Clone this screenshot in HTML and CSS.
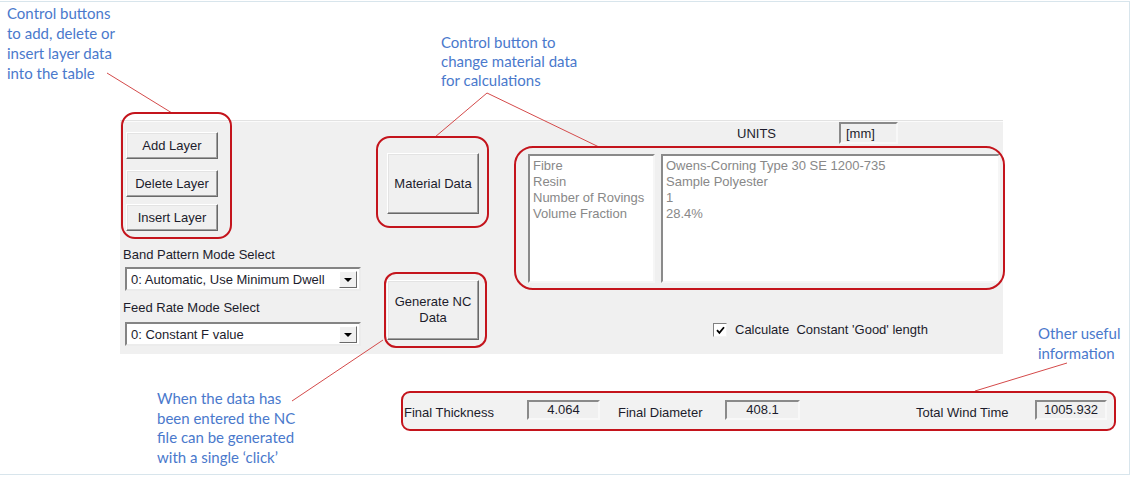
FILE: index.html
```html
<!DOCTYPE html>
<html lang="en">
  <head>
    <meta charset="UTF-8" />
    <meta name="viewport" content="width=device-width, initial-scale=1.0" />
    <title>Winding Program - Controls</title>
    <link rel="stylesheet" href="styles.css">
  </head>
  <body>
    <div class="frame">
      <div class="panel">
        <div class="col-layers">
          <button class="btn btn-layer">Add Layer</button>
          <button class="btn btn-layer btn-delete">Delete Layer</button>
          <button class="btn btn-layer btn-insert">Insert Layer</button>
          <div class="field-label band-label">Band Pattern Mode Select</div>
          <div class="combo band-combo">
            <span class="combo-text">0: Automatic, Use Minimum Dwell</span>
            <span class="combo-arrow"></span>
          </div>
          <div class="field-label feed-label">Feed Rate Mode Select</div>
          <div class="combo feed-combo">
            <span class="combo-text">0: Constant F value</span>
            <span class="combo-arrow"></span>
          </div>
        </div>
        <div class="col-actions">
          <button class="btn btn-material">Material Data</button>
          <button class="btn btn-generate">Generate NC<br>Data</button>
        </div>
        <div class="col-info">
          <div class="units-row">
            <span class="units-label">UNITS</span>
            <span class="readout units-box">[mm]</span>
          </div>
          <div class="material-info">
            <div class="info-box info-keys">Fibre<br>Resin<br>Number of Rovings<br>Volume Fraction</div>
            <div class="info-box info-values">Owens-Corning Type 30 SE 1200-735<br>Sample Polyester<br>1<br>28.4%</div>
          </div>
          <div class="check-row">
            <span class="check-box">
              <svg width="9" height="9" viewBox="0 0 9 9"><path d="M1 4.2 L3.4 6.8 L8 1.2" fill="none" stroke="#000" stroke-width="1.8"/></svg>
            </span>
            <span>Calculate&nbsp; Constant 'Good' length</span>
          </div>
        </div>
      </div>

      <div class="summary">
        <span class="sum-label thick-label">Final Thickness</span>
        <span class="readout sum-box thick-box">4.064</span>
        <span class="sum-label dia-label">Final Diameter</span>
        <span class="readout sum-box dia-box">408.1</span>
        <span class="sum-label time-label">Total Wind Time</span>
        <span class="readout sum-box time-box">1005.932</span>
      </div>

      <!-- annotation layer -->
      <svg class="callouts" width="1130" height="472" viewBox="0 2 1130 472">
        <g class="leaders">
          <line x1="107" y1="73" x2="172" y2="113" />
          <line x1="487" y1="93" x2="435" y2="137" />
          <line x1="487" y1="93" x2="599" y2="147" />
          <line x1="383" y1="340" x2="292" y2="401" />
          <line x1="1067" y1="363" x2="975" y2="391" />
        </g>
        <g class="rings">
          <rect x="122" y="113" width="109" height="125" rx="13" />
          <rect x="377" y="137" width="111" height="90" rx="13" />
          <rect x="385" y="273" width="101" height="74" rx="11" />
          <rect x="515" y="147" width="489" height="142" rx="18" />
          <rect x="402" y="392" width="713" height="38" rx="8" />
        </g>
      </svg>

      <div class="note note-layers">Control buttons<br>to add, delete or<br>insert layer data<br>into the table</div>
      <div class="note note-material">Control button to<br>change material data<br>for calculations</div>
      <div class="note note-generate">When the data has<br>been entered the NC<br>file can be generated<br>with a single ‘click’</div>
      <div class="note note-other">Other useful<br>information</div>
    </div>
  </body>
</html>
```

FILE: styles.css
```css
body {
  margin: 0;
  padding: 0;
  background: #fff;
  font-family: "Liberation Sans", Arial, sans-serif;
  font-size: 13px;
  color: #1c1c2c;
}
.frame {
  position: relative;
  width: 1129px;
  height: 472px;
  margin-top: 1px;
  border-top: 1px solid #d8e5ec;
  border-right: 1px solid #d8e5ec;
  border-bottom: 1px solid #d8e5ec;
  overflow: hidden;
}

/* grey form panel */
.panel {
  display: flex;
  width: 883px;
  height: 233px;
  margin-top: 118px;
  margin-left: 120px;
  border-top: 1px solid #e2e2e2;
  box-shadow: inset 0 1px 0 #fbfbfb;
  background: #f0f0f0;
}
.col-layers {
  display: flex;
  flex-direction: column;
  width: 240px;
  margin-left: 3px;
}
.col-actions {
  display: flex;
  flex-direction: column;
  width: 93px;
  margin-left: 24px;
}
.col-info {
  display: flex;
  flex-direction: column;
  width: 472px;
  margin-left: 48px;
}

.btn {
  font-family: "Liberation Sans", Arial, sans-serif;
  font-size: 13px;
  color: #1c1c2c;
  background: #f0f0f0;
  border: 1px solid;
  border-color: #fff #696969 #696969 #fff;
  box-shadow: inset -1px -1px 0 #a0a0a0, inset 1px 1px 0 #e3e3e3;
  padding: 0;
  line-height: 16px;
  cursor: pointer;
}
.btn-layer {
  width: 92px;
  height: 27px;
  margin-left: 3px;
  margin-top: 11px;
}
.btn-insert {
  margin-top: 7px;
}
.btn-material {
  width: 92px;
  height: 61px;
  margin-top: 32px;
}
.btn-generate {
  width: 92px;
  height: 60px;
  margin-top: 66px;
}

.field-label {
  line-height: 16px;
}
.band-label {
  margin-top: 16px;
}
.feed-label {
  margin-top: 9px;
}
.combo {
  display: flex;
  align-items: center;
  justify-content: space-between;
  box-sizing: border-box;
  width: 236px;
  height: 24px;
  margin-left: 2px;
  margin-top: 4px;
  padding: 0 2px 0 4px;
  background: #fff;
  border: 2px solid;
  border-color: #848484 #ececec #ececec #848484;
}
.feed-combo {
  margin-top: 6px;
}
.combo-arrow {
  position: relative;
  box-sizing: border-box;
  width: 18px;
  height: 17px;
  background: #f0f0f0;
  border: 1px solid;
  border-color: #fff #696969 #696969 #fff;
}
.combo-arrow::after {
  content: "";
  position: absolute;
  left: 4px;
  top: 6px;
  border-left: 4px solid transparent;
  border-right: 4px solid transparent;
  border-top: 4px solid #000;
}

.readout {
  box-sizing: border-box;
  background: #f0f0f0;
  border: 2px solid;
  border-color: #8a8a8a #f8f8f8 #f8f8f8 #8a8a8a;
}
.units-row {
  display: flex;
  align-items: center;
  height: 22px;
  margin-top: 1px;
}
.units-label {
  margin-left: 209px;
  width: 102px;
}
.units-box {
  width: 59px;
  height: 22px;
  padding: 2px 0 0 5px;
  line-height: 16px;
}

.material-info {
  display: flex;
  height: 129px;
  margin-top: 10px;
}
.info-box {
  box-sizing: border-box;
  height: 129px;
  padding: 2px 3px;
  background: #fff;
  color: #888;
  line-height: 16px;
  border: 2px solid;
  border-color: #8a8a8a #f6f6f6 #f6f6f6 #8a8a8a;
}
.info-keys {
  width: 127px;
}
.info-values {
  width: 339px;
  margin-left: 6px;
}

.check-row {
  display: flex;
  align-items: center;
  gap: 8px;
  margin-top: 40px;
  margin-left: 185px;
  line-height: 14px;
}
.check-box {
  display: flex;
  align-items: center;
  justify-content: center;
  box-sizing: border-box;
  width: 14px;
  height: 14px;
  background: #fff;
  border: 1px solid;
  border-color: #808080 #f4f4f4 #f4f4f4 #808080;
}

/* totals strip */
.summary {
  display: flex;
  align-items: center;
  width: 713px;
  height: 38px;
  margin-top: 37px;
  margin-left: 402px;
  background: #f2f2f2;
  border-radius: 8px;
}
.sum-label {
  padding-top: 4px;
}
.thick-label {
  width: 123px;
  margin-left: 2px;
}
.dia-label {
  width: 107px;
  margin-left: 18px;
}
.time-label {
  width: 119px;
  margin-left: 116px;
}
.sum-box {
  height: 20px;
  line-height: 16px;
  text-align: center;
}
.thick-box {
  width: 73px;
}
.dia-box {
  width: 75px;
}
.time-box {
  width: 72px;
}

/* annotations */
.callouts {
  position: absolute;
  left: 0;
  top: 0;
  pointer-events: none;
}
.leaders line {
  stroke: #d44a4a;
  stroke-width: 1;
}
.rings rect {
  fill: none;
  stroke: #c4141c;
  stroke-width: 2;
}
.note {
  position: absolute;
  font-family: Lato, "Open Sans", sans-serif;
  font-size: 15px;
  color: #4a79cc;
  line-height: 20px;
  white-space: nowrap;
}
.note-layers {
  left: 7px;
  top: 1px;
}
.note-material {
  left: 441px;
  top: 31px;
  line-height: 19px;
}
.note-generate {
  left: 157px;
  top: 387px;
  line-height: 19.5px;
}
.note-other {
  left: 1038px;
  top: 321px;
}
```
